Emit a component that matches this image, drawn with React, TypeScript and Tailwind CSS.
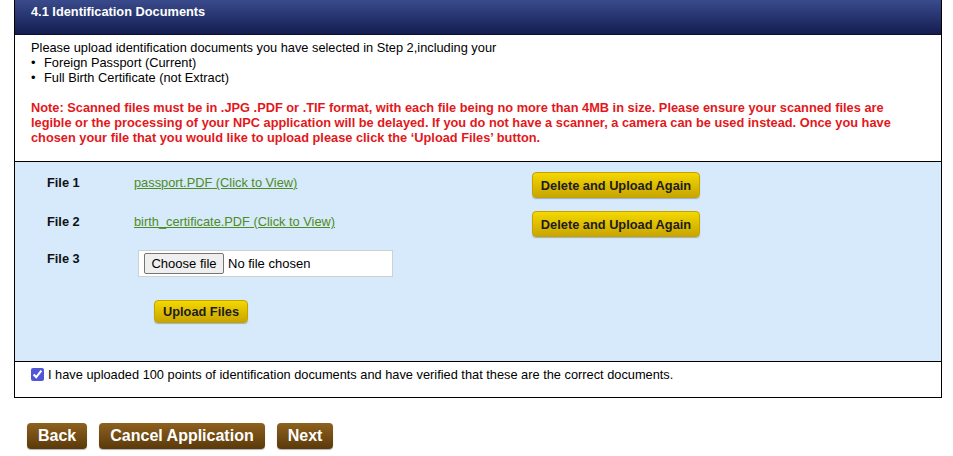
import { useState } from 'react'

const font = "font-['Liberation_Sans',Arial,sans-serif]"

function YellowButton({ label, className = '' }: { label: string; className?: string }) {
  return (
    <button
      type="button"
      className={`whitespace-nowrap rounded-[4px] border border-[#c4a300] bg-gradient-to-b from-[#f4d800] to-[#c9a500] text-center text-[12.8px] font-bold leading-[15px] text-[#1c1c1c] shadow-[0_1px_1px_rgba(0,0,0,0.25)] ${className}`}
    >
      {label}
    </button>
  )
}

function BrownButton({ label }: { label: string }) {
  return (
    <button
      type="button"
      className="h-[26px] whitespace-nowrap rounded-[4px] bg-gradient-to-b from-[#8e621f] to-[#5a390a] px-[11px] text-[16px] font-bold leading-[26px] text-white shadow-[0_1px_1px_rgba(0,0,0,0.3)]"
    >
      {label}
    </button>
  )
}

interface FileRowProps {
  label: string
  file: string
}

function UploadedRow({ label, file }: FileRowProps) {
  return (
    <div className="flex h-[26px] items-start">
      <span className="w-[87px] pt-[3px] text-[12.8px] font-bold leading-[15px] text-[#111]">{label}</span>
      <a href="#" className="w-[398px] pt-[3px] text-[12.8px] leading-[15px] text-[#4f8a23] underline">
        {file} (Click to View)
      </a>
      <YellowButton label="Delete and Upload Again" className="h-[26px] w-[168px]" />
    </div>
  )
}

export default function App() {
  const [checked, setChecked] = useState(true)
  const [fileName, setFileName] = useState('')

  return (
    <div className={`min-h-[456px] w-[953px] bg-white ${font} text-black`}>
      <div className="ml-[14px] w-[928px] border-x border-b border-black">
        {/* Section header */}
        <div className="h-[35px] border-b border-[#0b1030] bg-gradient-to-b from-[#3a4b8c] via-[#26346f] to-[#151d50] pl-[16px] pt-[4px]">
          <h2 className="text-[12.8px] font-bold leading-[15px] text-white">4.1 Identification Documents</h2>
        </div>

        {/* Instructions */}
        <div className="px-[16px] pb-[16px] pt-[5px] text-[12.8px] leading-[15px]">
          <p>Please upload identification documents you have selected in Step 2,including your</p>
          <ul>
            <li className="flex">
              <span className="w-[13px]">•</span>Foreign Passport (Current)
            </li>
            <li className="flex">
              <span className="w-[13px]">•</span>Full Birth Certificate (not Extract)
            </li>
          </ul>
          <p className="mt-[15px] whitespace-nowrap font-bold text-[#e3181b]">
            Note: Scanned files must be in .JPG .PDF or .TIF format, with each file being no more than 4MB in size. Please ensure your scanned files are
            <br />
            legible or the processing of your NPC application will be delayed. If you do not have a scanner, a camera can be used instead. Once you have
            <br />
            chosen your file that you would like to upload please click the ‘Upload Files’ button.
          </p>
        </div>

        {/* Files */}
        <div className="border-y border-black bg-[#d6eafb] pb-[38px] pl-[32px] pt-[10px]">
          <UploadedRow label="File 1" file="passport.PDF" />
          <div className="mt-[13px]">
            <UploadedRow label="File 2" file="birth_certificate.PDF" />
          </div>
          <div className="mt-[12px] flex items-start">
            <span className="w-[87px] pt-[2px] text-[12.8px] font-bold leading-[15px] text-[#111]">File 3</span>
            <label className="ml-[4px] mt-[1px] flex h-[27px] w-[255px] cursor-pointer items-center border border-[#d0d0d0] bg-white pl-[5px] text-[13px] leading-[15px]">
              <input
                type="file"
                className="hidden"
                onChange={e => setFileName(e.target.files?.[0]?.name ?? '')}
              />
              <span className="flex h-[21px] w-[80px] items-center justify-center rounded-[2px] border border-[#767676] bg-[#efefef]">
                Choose file
              </span>
              <span className="ml-[4px]">{fileName || 'No file chosen'}</span>
            </label>
          </div>
          <div className="mt-[22px] pl-[107px]">
            <YellowButton label="Upload Files" className="h-[23px] w-[94px]" />
          </div>
        </div>

        {/* Confirmation */}
        <label className="flex h-[35px] items-start gap-[4px] pl-[16px] pt-[5px] text-[12.8px] leading-[15px]">
          <input
            type="checkbox"
            checked={checked}
            onChange={() => setChecked(!checked)}
            className="mt-[1px] h-[13px] w-[13px] accent-[#4f56d8]"
          />
          I have uploaded 100 points of identification documents and have verified that these are the correct documents.
        </label>
      </div>

      {/* Navigation */}
      <div className="ml-[27px] mt-[25px] flex gap-[12px]">
        <BrownButton label="Back" />
        <BrownButton label="Cancel Application" />
        <BrownButton label="Next" />
      </div>
    </div>
  )
}
